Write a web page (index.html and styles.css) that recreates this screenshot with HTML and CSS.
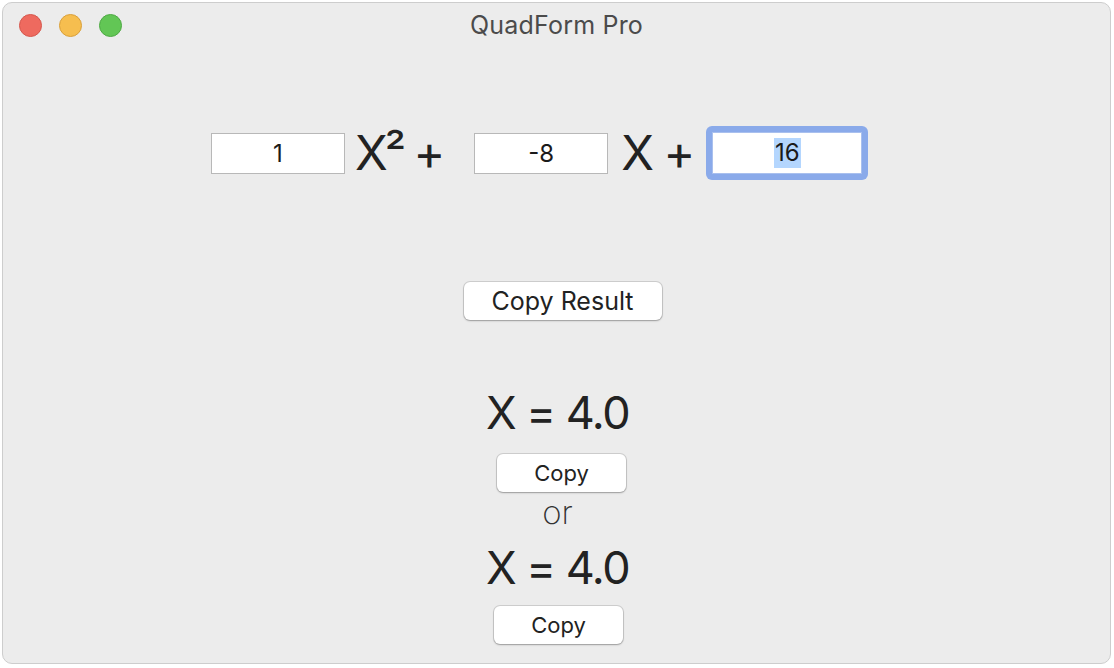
FILE: index.html
```html
<!DOCTYPE html>
<html>
<head>
<meta charset="utf-8">
<title>QuadForm Pro</title>
<link rel="stylesheet" href="styles.css">
</head>
<body>
<div class="window">
  <div class="titlebar">
    <div class="lights">
      <span class="light red"></span>
      <span class="light yellow"></span>
      <span class="light green"></span>
    </div>
    <div class="title">QuadForm Pro</div>
    <div></div>
  </div>
  <div class="equation">
    <div class="field">1</div>
    <span class="term term-sq">X² +</span>
    <div class="field">-8</div>
    <span class="term term-x">X +</span>
    <div class="focus-ring"><div class="field field-wide"><span class="sel">16</span></div></div>
  </div>
  <div class="actions">
    <button class="btn btn-large">Copy Result</button>
  </div>
  <div class="results">
    <div class="root">X = 4.0</div>
    <button class="btn btn-small">Copy</button>
    <div class="or">or</div>
    <div class="root root-2">X = 4.0</div>
    <button class="btn btn-small btn-second">Copy</button>
  </div>
</div>
</body>
</html>
```

FILE: styles.css
```css
html, body {
  margin: 0;
  padding: 0;
  background: #ffffff;
}

body {
  font-family: Inter, "Noto Sans", "Liberation Sans", sans-serif;
  color: #222222;
}

.window {
  margin: 2px 0 0 2px;
  width: 1109px;
  height: 662px;
  box-sizing: border-box;
  background: #ececec;
  border: 1px solid #cdcdcd;
  border-radius: 10px;
  display: flex;
  flex-direction: column;
  overflow: hidden;
}

.titlebar {
  height: 44px;
  display: grid;
  grid-template-columns: 1fr auto 1fr;
  align-items: center;
}

.lights {
  display: flex;
  gap: 17px;
  padding-left: 16px;
  padding-top: 1px;
}

.light {
  width: 23px;
  height: 23px;
  border-radius: 50%;
  box-sizing: border-box;
}

.red { background: #ee6a5f; border: 1px solid #d5574d; }
.yellow { background: #f6be4f; border: 1px solid #d9a03b; }
.green { background: #62c655; border: 1px solid #4ea944; }

.title {
  font-size: 25px;
  color: #4b4b4b;
  letter-spacing: 0.2px;
}

.equation {
  margin-top: 79px;
  display: flex;
  align-items: center;
  justify-content: flex-start;
  padding-left: 208px;
}

.field {
  width: 134px;
  height: 41px;
  box-sizing: border-box;
  background: #ffffff;
  border: 1px solid #b8b8b8;
  display: flex;
  align-items: center;
  justify-content: center;
  font-size: 24px;
  color: #1a1a1a;
}

.field-wide {
  width: 150px;
  height: 42px;
  border-color: #a9c0ee;
}

.focus-ring {
  padding: 6px;
  background: #8aaaea;
  border-radius: 6px;
}

.sel {
  background: #b4d6fe;
  padding: 0 1px;
  line-height: 30px;
}

.term {
  font-size: 48px;
  line-height: 1;
  color: #222222;
}

.term-sq {
  letter-spacing: -3px;
  margin-left: 10px;
  margin-right: 32px;
}

.term-x {
  letter-spacing: -2px;
  margin-left: 13px;
  margin-right: 13px;
}

.actions {
  margin-top: 102px;
  display: flex;
  justify-content: center;
  padding-left: 12px;
}

.btn {
  font-family: Inter, "Noto Sans", "Liberation Sans", sans-serif;
  background: #ffffff;
  border: none;
  border-radius: 6px;
  box-shadow: 0 0 0 1px rgba(0, 0, 0, 0.12), 0 1px 2px rgba(0, 0, 0, 0.25);
  color: #222222;
  padding: 0;
}

.btn-large {
  width: 198px;
  height: 38px;
  font-size: 25px;
}

.results {
  display: flex;
  flex-direction: column;
  align-items: center;
  margin-top: 66px;
}

.root {
  font-size: 45px;
  line-height: 54px;
  letter-spacing: -1.5px;
  margin-left: 2px;
}

.btn-small {
  width: 129px;
  height: 38px;
  font-size: 22px;
  margin-top: 14px;
  margin-left: 10px;
}

.or {
  font-size: 33px;
  font-weight: 200;
  line-height: 30px;
  margin-top: 5px;
  color: #333333;
  margin-left: 2px;
}

.root-2 {
  margin-top: 14px;
}

.btn-second {
  margin-top: 11px;
  margin-left: 4px;
}
```
